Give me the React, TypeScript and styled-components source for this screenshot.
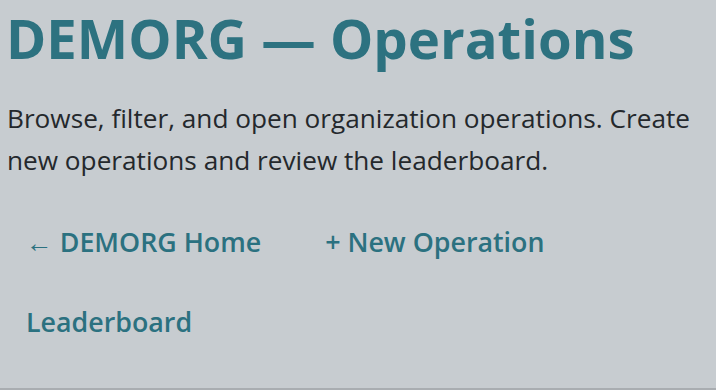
import React from "react";
import styled, { createGlobalStyle } from "styled-components";

const GlobalStyle = createGlobalStyle`
    html, body {
        margin: 0;
        padding: 0;
        background-color: #c7ccd0;
    }
    body {
        font-family: "Open Sans", "Noto Sans", sans-serif;
    }
`;

const Page = styled.div`
    width: 716px;
    height: 390px;
    box-sizing: border-box;
    padding: 0 6px;
    border-bottom: 2px solid #a9adb1;
    overflow: hidden;
`;

const Title = styled.h1`
    margin: 6px 0 0 0;
    font-size: 54.5px;
    font-weight: 700;
    line-height: 64px;
    color: #2d7280;
    white-space: nowrap;
`;

const Lead = styled.p`
    margin: 27px 0 0 1px;
    font-size: 26.2px;
    line-height: 42px;
    color: #24282c;
`;

const LinkList = styled.nav`
    display: flex;
    flex-wrap: wrap;
    row-gap: 32px;
    column-gap: 24px;
    margin-top: 37px;
`;

const NavLink = styled.a`
    display: inline-block;
    padding: 8px 20px;
    font-size: 26.8px;
    font-weight: 600;
    line-height: 32px;
    color: #2b7180;
    text-decoration: none;
`;

const App: React.FC = () => {
    return (
        <>
            <GlobalStyle />
            <Page>
                <Title>DEMORG — Operations</Title>
                <Lead>
                    Browse, filter, and open organization operations. Create new operations and review the leaderboard.
                </Lead>
                <LinkList>
                    <NavLink href="#">← DEMORG Home</NavLink>
                    <NavLink href="#">+ New Operation</NavLink>
                    <NavLink href="#">Leaderboard</NavLink>
                </LinkList>
            </Page>
        </>
    );
};

export default App;
